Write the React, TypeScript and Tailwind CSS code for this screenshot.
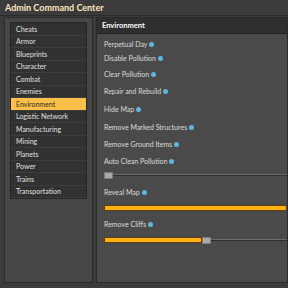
import React from "react";

const categories = [
  "Cheats",
  "Armor",
  "Blueprints",
  "Character",
  "Combat",
  "Enemies",
  "Environment",
  "Logistic Network",
  "Manufacturing",
  "Mining",
  "Planets",
  "Power",
  "Trains",
  "Transportation",
];

function Info() {
  return (
    <span className="ml-[2px] inline-flex h-[5px] w-[5px] items-center justify-center rounded-full bg-[#5fb6e0]" />
  );
}

function Label({ text, h }: { text: string; h: string }) {
  return (
    <div className={`flex items-center ${h}`}>
      <span className="text-[7px] text-[#dcdcdc]">{text}</span>
      <Info />
    </div>
  );
}

function Slider({ fill }: { fill: number }) {
  return (
    <div className="flex h-[10px] items-center">
      {fill > 0 && (
        <div
          className="h-[6px] border border-[#5a3d10] bg-[#ffb10a]"
          style={{ width: `${fill}px` }}
        />
      )}
      {fill < 183 && (
        <>
          <div className="h-[7px] w-[9px] border border-[#7a7a7a] bg-[#a9a9a9]" />
          <div className="h-[2px] flex-1 border-b border-[#2e2e2e] bg-[#6b6b6b]" />
        </>
      )}
    </div>
  );
}

export default function App() {
  return (
    <main
      className="flex h-[288px] w-[288px] flex-col overflow-hidden bg-[#3b3b3b]"
      style={{ fontFamily: "Lato, 'Open Sans', sans-serif" }}
    >
      <div className="flex h-[16px] items-center px-[5px] pt-[1px] border-b border-[#2a2a2a]">
        <h1 className="text-[9px] font-bold text-[#ffe6c0]">Admin Command Center</h1>
      </div>

      <div className="flex flex-1 gap-[3px] pl-[4px] pb-[5px] pt-[1px]">
        <div className="flex w-[90px] flex-col border border-[#2b2b2b] bg-[#464646] px-[5px] pt-[4px]">
          <div className="flex flex-col border border-[#262626] bg-[#313131]">
            {categories.map((c) => (
              <div
                key={c}
                className={`flex h-[12.5px] items-center px-[5px] text-[7px] border-b border-[#3d3d3d] ${
                  c === "Environment"
                    ? "bg-[#fbc048] text-[#2a2a2a]"
                    : "text-[#e0e0e0]"
                }`}
              >
                {c}
              </div>
            ))}
          </div>
        </div>

        <div className="flex flex-1 flex-col border border-[#2b2b2b] bg-[#4a4a4a]">
          <div className="flex h-[16px] items-center bg-[#2f2f2f] px-[5px] border-b border-[#232323]">
            <span className="text-[7.5px] font-bold text-white">Environment</span>
          </div>
          <div className="flex flex-col pl-[7px] pt-[3px]">
            <Label text="Perpetual Day" h="h-[14px]" />
            <Label text="Disable Pollution" h="h-[15px]" />
            <Label text="Clear Pollution" h="h-[16px]" />
            <Label text="Repair and Rebuild" h="h-[18px]" />
            <Label text="Hide Map" h="h-[18px]" />
            <Label text="Remove Marked Structures" h="h-[18px]" />
            <Label text="Remove Ground Items" h="h-[17px]" />
            <Label text="Auto Clean Pollution" h="h-[17px]" />
            <Slider fill={0} />
            <div className="h-[6px]" />
            <Label text="Reveal Map" h="h-[12px]" />
            <div className="h-[5px]" />
            <Slider fill={183} />
            <div className="h-[5px]" />
            <Label text="Remove Cliffs" h="h-[12px]" />
            <div className="h-[5px]" />
            <Slider fill={98} />
          </div>
        </div>
      </div>
    </main>
  );
}
